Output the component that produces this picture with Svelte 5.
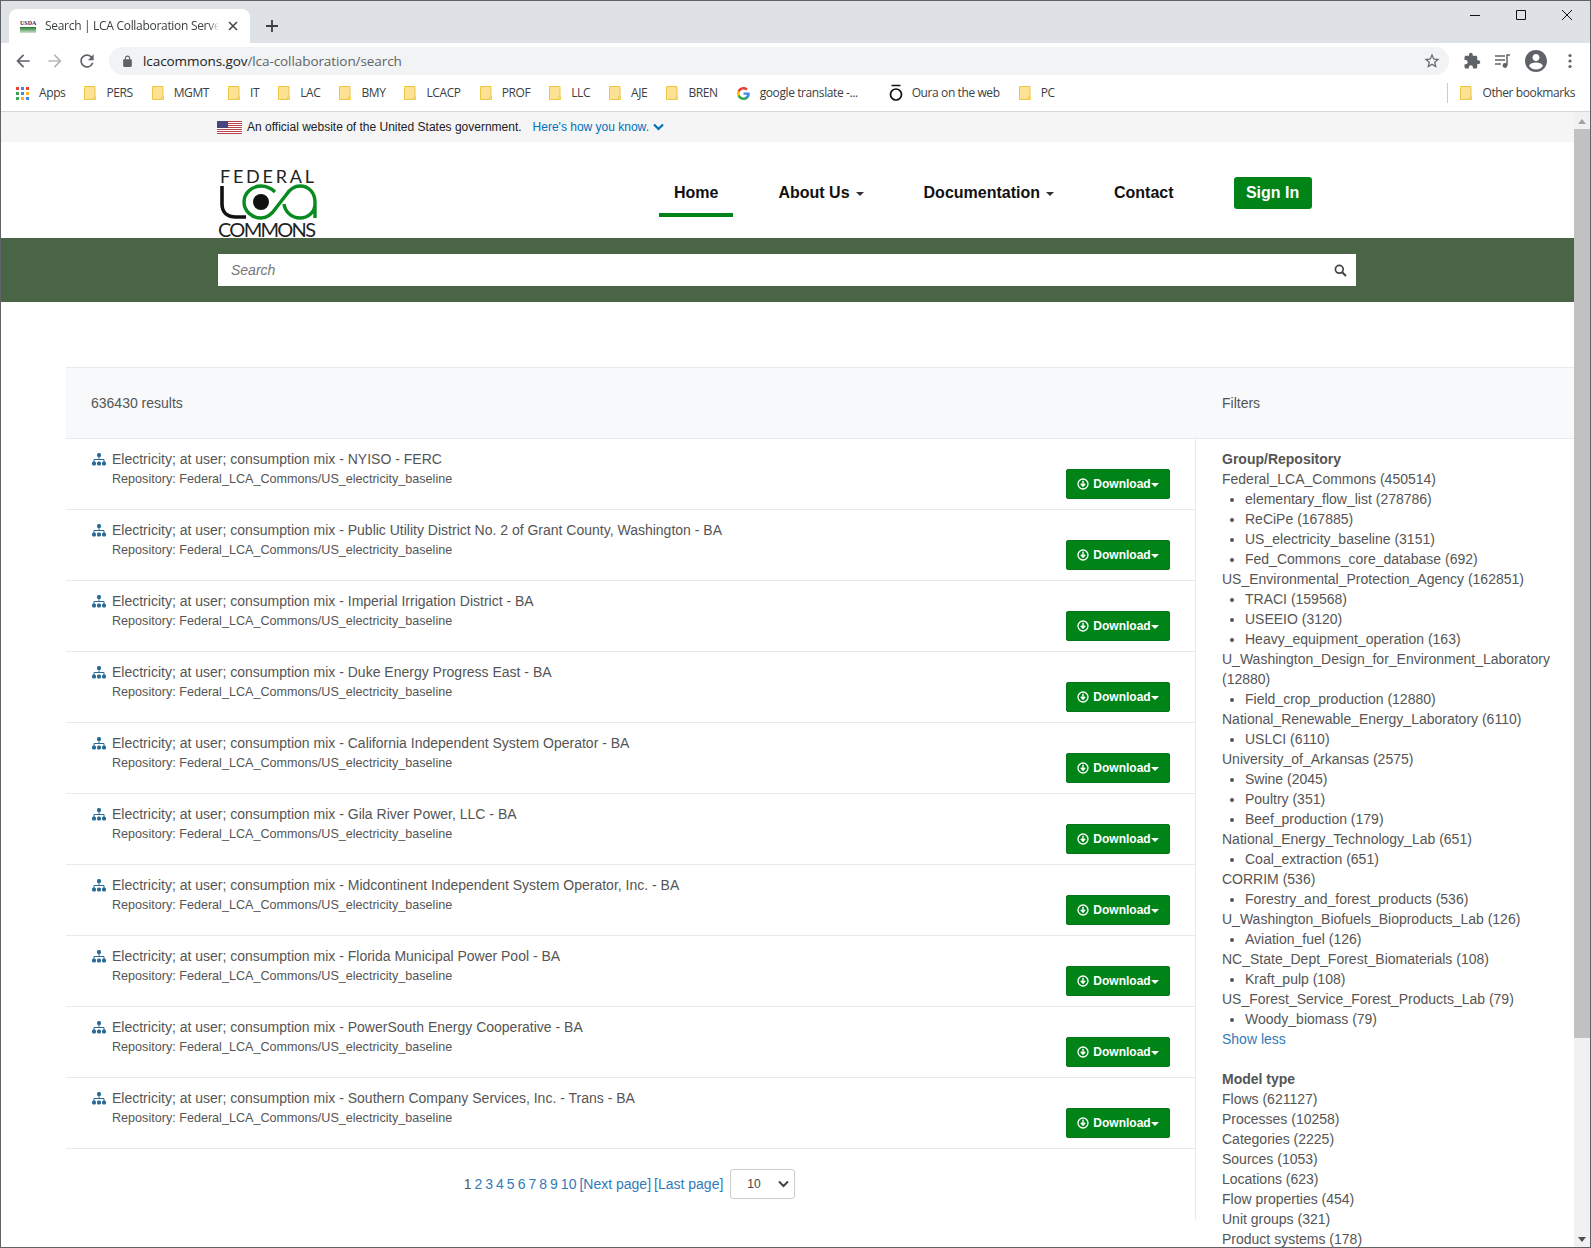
<script>
	const bookmarks = [
		{ label: 'PERS' }, { label: 'MGMT' }, { label: 'IT' }, { label: 'LAC' }, { label: 'BMY' },
		{ label: 'LCACP' }, { label: 'PROF' }, { label: 'LLC' }, { label: 'AJE' }, { label: 'BREN' }
	];

	const results = [
		'NYISO - FERC',
		'Public Utility District No. 2 of Grant County, Washington - BA',
		'Imperial Irrigation District - BA',
		'Duke Energy Progress East - BA',
		'California Independent System Operator - BA',
		'Gila River Power, LLC - BA',
		'Midcontinent Independent System Operator, Inc. - BA',
		'Florida Municipal Power Pool - BA',
		'PowerSouth Energy Cooperative - BA',
		'Southern Company Services, Inc. - Trans - BA'
	];

	const groups = [
		{ name: 'Federal_LCA_Commons (450514)', items: ['elementary_flow_list (278786)', 'ReCiPe (167885)', 'US_electricity_baseline (3151)', 'Fed_Commons_core_database (692)'] },
		{ name: 'US_Environmental_Protection_Agency (162851)', items: ['TRACI (159568)', 'USEEIO (3120)', 'Heavy_equipment_operation (163)'] },
		{ name: 'U_Washington_Design_for_Environment_Laboratory (12880)', items: ['Field_crop_production (12880)'] },
		{ name: 'National_Renewable_Energy_Laboratory (6110)', items: ['USLCI (6110)'] },
		{ name: 'University_of_Arkansas (2575)', items: ['Swine (2045)', 'Poultry (351)', 'Beef_production (179)'] },
		{ name: 'National_Energy_Technology_Lab (651)', items: ['Coal_extraction (651)'] },
		{ name: 'CORRIM (536)', items: ['Forestry_and_forest_products (536)'] },
		{ name: 'U_Washington_Biofuels_Bioproducts_Lab (126)', items: ['Aviation_fuel (126)'] },
		{ name: 'NC_State_Dept_Forest_Biomaterials (108)', items: ['Kraft_pulp (108)'] },
		{ name: 'US_Forest_Service_Forest_Products_Lab (79)', items: ['Woody_biomass (79)'] }
	];

	const modelTypes = [
		'Flows (621127)', 'Processes (10258)', 'Categories (2225)', 'Sources (1053)',
		'Locations (623)', 'Flow properties (454)', 'Unit groups (321)', 'Product systems (178)'
	];

	const pages = [2, 3, 4, 5, 6, 7, 8, 9, 10];
	const appColors = ['#ea4335', '#4285f4', '#ea4335', '#34a853', '#4285f4', '#fbbc05', '#34a853', '#fbbc05', '#4285f4'];
</script>

{#snippet folder()}
	<svg class="folder" width="12" height="14" viewBox="0 0 12 14">
		<path d="M.5.5h10.5v13H.5z" fill="#fde293" stroke="#eec643" />
		<path d="M9.5 11h2v2.5h-2z" fill="#fde293" stroke="#eec643" stroke-width=".8" />
	</svg>
{/snippet}

<div class="window">
	<div class="tabstrip">
		<div class="tab">
			<div class="favicon">
				<span>USDA</span>
				<i></i>
			</div>
			<span class="tab-title">Search | LCA Collaboration Server</span>
			<svg class="tab-close" width="10" height="10" viewBox="0 0 10 10">
				<path d="M1 1l8 8M9 1L1 9" stroke="#45494d" stroke-width="1.6" />
			</svg>
		</div>
		<svg class="new-tab" width="12" height="12" viewBox="0 0 12 12">
			<path d="M6 0v12M0 6h12" stroke="#3c4043" stroke-width="1.8" />
		</svg>
		<div class="win-controls">
			<svg width="12" height="12" viewBox="0 0 12 12"><path d="M1 6.5h10" stroke="#111" /></svg>
			<svg width="12" height="12" viewBox="0 0 12 12"><path d="M1.5 1.5h9v9h-9z" fill="none" stroke="#111" /></svg>
			<svg width="12" height="12" viewBox="0 0 12 12"><path d="M1 1l10 10M11 1L1 11" stroke="#111" /></svg>
		</div>
	</div>

	<div class="toolbar">
		<svg class="nav-ico" width="20" height="20" viewBox="0 0 24 24"><path fill="#5f6368" d="M20 11H7.83l5.59-5.59L12 4l-8 8 8 8 1.41-1.41L7.83 13H20v-2z" /></svg>
		<svg class="nav-ico" width="20" height="20" viewBox="0 0 24 24"><path fill="#b5b8bb" d="M4 11h12.17l-5.59-5.59L12 4l8 8-8 8-1.41-1.41L16.17 13H4v-2z" /></svg>
		<svg class="nav-ico" width="20" height="20" viewBox="0 0 24 24"><path fill="#5f6368" d="M17.65 6.35A7.958 7.958 0 0 0 12 4c-4.42 0-7.99 3.58-7.99 8s3.57 8 7.99 8c3.73 0 6.84-2.55 7.73-6h-2.08A5.99 5.99 0 0 1 12 18c-3.31 0-6-2.69-6-6s2.69-6 6-6c1.66 0 3.14.69 4.22 1.78L13 11h7V4l-2.35 2.35z" /></svg>
		<div class="omnibox">
			<svg width="13" height="13" viewBox="0 0 24 24"><path fill="#5f6368" d="M18 8h-1V6c0-2.76-2.24-5-5-5S7 3.24 7 6v2H6c-1.1 0-2 .9-2 2v10c0 1.1.9 2 2 2h12c1.1 0 2-.9 2-2V10c0-1.1-.9-2-2-2zM9 6c0-1.66 1.34-3 3-3s3 1.34 3 3v2H9V6z" /></svg>
			<span class="url">lcacommons.gov<span class="url-path">/lca-collaboration/search</span></span>
			<svg class="star" width="18" height="18" viewBox="0 0 24 24"><path fill="#5f6368" d="M22 9.24l-7.19-.62L12 2 9.19 8.63 2 9.24l5.46 4.73L5.82 21 12 17.27 18.18 21l-1.63-7.03L22 9.24zM12 15.4l-3.76 2.27 1-4.28-3.32-2.88 4.38-.38L12 6.1l1.71 4.04 4.38.38-3.32 2.88 1 4.28L12 15.4z" /></svg>
		</div>
		<div class="tool-icons">
			<svg width="18" height="18" viewBox="0 0 24 24"><path fill="#5f6368" d="M20.5 11H19V7c0-1.1-.9-2-2-2h-4V3.5C13 2.12 11.88 1 10.5 1S8 2.12 8 3.5V5H4c-1.1 0-1.99.9-1.99 2v3.8H3.5c1.49 0 2.7 1.21 2.7 2.7s-1.21 2.7-2.7 2.7H2V20c0 1.1.9 2 2 2h3.8v-1.5c0-1.49 1.21-2.7 2.7-2.7 1.49 0 2.7 1.21 2.7 2.7V22H17c1.1 0 2-.9 2-2v-4h1.5c1.38 0 2.5-1.12 2.5-2.5S21.88 11 20.5 11z" /></svg>
			<svg width="18" height="18" viewBox="0 0 18 18"><path fill="none" stroke="#5f6368" stroke-width="1.4" d="M1 4h10M1 8h10M1 12h6" /><path fill="none" stroke="#5f6368" stroke-width="1.5" d="M13 13V3h3" /><circle cx="11" cy="13.5" r="2.4" fill="#5f6368" /></svg>
			<svg class="avatar" width="24" height="24" viewBox="0 0 24 24"><path fill="#5f6368" d="M12 1C5.9 1 1 5.9 1 12s4.9 11 11 11 11-4.900 11-11S18.100 1 12 1zm0 4c1.900 0 3.500 1.600 3.500 3.500S13.900 12 12 12s-3.500-1.600-3.500-3.500S10.100 5 12 5zm0 15.500c-2.800 0-5.300-1.400-6.800-3.600.03-2.200 4.500-3.400 6.800-3.400 2.200 0 6.700 1.200 6.800 3.400-1.500 2.200-4 3.600-6.800 3.600z" /></svg>
			<svg class="dots" width="6" height="16" viewBox="0 0 6 16"><circle cx="3" cy="2.500" r="1.600" fill="#5f6368" /><circle cx="3" cy="8" r="1.600" fill="#5f6368" /><circle cx="3" cy="13.500" r="1.600" fill="#5f6368" /></svg>
		</div>
	</div>

	<div class="bookmarks">
		<div class="bm">
			<div class="apps">
				{#each appColors as c}
					<i style="background:{c}"></i>
				{/each}
			</div>
			<span>Apps</span>
		</div>
		{#each bookmarks as b}
			<div class="bm">
				{@render folder()}
				<span>{b.label}</span>
			</div>
		{/each}
		<div class="bm">
			<svg width="13" height="13" viewBox="0 0 24 24">
				<path fill="#4285f4" d="M23.500 12.300c0-.8-.1-1.600-.2-2.300H12v4.500h6.500c-.3 1.500-1.100 2.800-2.400 3.600v3h3.900c2.300-2.100 3.500-5.200 3.500-8.800z" />
				<path fill="#34a853" d="M12 24c3.200 0 6-1.100 8-2.900l-3.900-3c-1.100.7-2.500 1.200-4.100 1.200-3.100 0-5.800-2.100-6.700-5H1.300v3.100C3.300 21.300 7.300 24 12 24z" />
				<path fill="#fbbc05" d="M5.300 14.300c-.5-1.500-.5-3.100 0-4.600V6.600H1.300c-1.700 3.300-1.700 7.500 0 10.800l4-3.100z" />
				<path fill="#ea4335" d="M12 4.800c1.800 0 3.300.6 4.600 1.800l3.400-3.400C17.900 1.200 15.200 0 12 0 7.300 0 3.300 2.700 1.300 6.600l4 3.100c.9-2.800 3.600-4.900 6.700-4.900z" />
			</svg>
			<span>google translate -...</span>
		</div>
		<div class="bm oura">
			<svg width="14" height="18" viewBox="0 0 14 18">
				<path d="M2.500 1.500h9" stroke="#111" stroke-width="1.500" />
				<circle cx="7" cy="10.500" r="5.500" fill="none" stroke="#111" stroke-width="1.700" />
			</svg>
			<span>Oura on the web</span>
		</div>
		<div class="bm">
			{@render folder()}
			<span>PC</span>
		</div>
		<div class="bm other">
			{@render folder()}
			<span>Other bookmarks</span>
		</div>
	</div>

	<div class="viewport">
		<div class="page">
			<div class="gov-banner">
				<svg width="25" height="13" viewBox="0 0 25 13">
					<rect width="25" height="13" fill="#fff" />
					<path d="M0 .5h25M0 2.500h25M0 4.500h25M0 6.500h25M0 8.500h25M0 10.500h25M0 12.500h25" stroke="#b8434f" />
					<rect width="11" height="7" fill="#46467f" />
				</svg>
				<span class="official">An official website of the United States government.</span>
				<span class="know">Here's how you know.</span>
				<svg width="11" height="8" viewBox="0 0 11 8"><path d="M1 1.500l4.500 4.500L10 1.500" fill="none" stroke="#0071bc" stroke-width="2.200" /></svg>
			</div>

			<header class="site-header">
				<svg class="logo" width="100" height="72" viewBox="0 0 100 72">
					<text x="2" y="17" class="logo-top" textLength="94">FEDERAL</text>
					<path d="M4 20V38C4 47 10 51 18 51H28" fill="none" stroke="#111" stroke-width="3.600" />
					<path d="M57 26C53 22 48 20 43 20C34 20 26 27 26 36C26 45 34 52 43 52C50 52 54 48 58 42L68 29C72 23 76 20 82 20C91 20 97 27 97 36V52M97 38C97 46 90 52 82 52C74 52 67 46 66 38" fill="none" stroke="#078a1f" stroke-width="3.400" />
					<circle cx="43" cy="36" r="8" fill="#111" />
					<text x="0" y="71" class="logo-bottom" textLength="98">COMMONS</text>
				</svg>
				<nav class="site-nav">
					<a class="nav-item active" href="#home">Home</a>
					<a class="nav-item" href="#about">About Us <i class="caret"></i></a>
					<a class="nav-item" href="#docs">Documentation <i class="caret"></i></a>
					<a class="nav-item" href="#contact">Contact</a>
					<a class="sign-in" href="#signin">Sign In</a>
				</nav>
			</header>

			<div class="search-band">
				<div class="search-box">
					<span>Search</span>
					<svg width="13" height="13" viewBox="0 0 13 13">
						<circle cx="5.300" cy="5.300" r="3.900" fill="none" stroke="#444" stroke-width="1.700" />
						<path d="M8.200 8.200l3.800 3.800" stroke="#444" stroke-width="2" />
					</svg>
				</div>
			</div>

			<section class="panel">
				<div class="panel-head">
					<div class="count">636430 results</div>
					<div class="filters-title">Filters</div>
				</div>
				<div class="panel-body">
					<div class="results">
						{#each results as r}
							<div class="row">
								<svg class="sitemap" width="14" height="13" viewBox="0 0 14 13">
									<rect x="5" y="0" width="4" height="4" rx="1.500" fill="#286b97" />
									<path d="M7 4v3M2 9V6.500h10V9" fill="none" stroke="#286b97" />
									<rect x="0" y="8.500" width="4" height="4" rx="1.500" fill="#286b97" />
									<rect x="5" y="8.500" width="4" height="4" rx="1.500" fill="#286b97" />
									<rect x="10" y="8.500" width="4" height="4" rx="1.500" fill="#286b97" />
								</svg>
								<div class="row-text">
									<div class="row-title">Electricity; at user; consumption mix - {r}</div>
									<div class="row-repo">Repository: Federal_LCA_Commons/US_electricity_baseline</div>
								</div>
								<button class="download" type="button">
									<svg width="12" height="12" viewBox="0 0 12 12">
										<circle cx="6" cy="6" r="5" fill="none" stroke="#fff" stroke-width="1.300" />
										<path d="M6 2.800v5M3.800 5.800L6 8.200l2.200-2.400" fill="none" stroke="#fff" stroke-width="1.400" />
									</svg>
									Download<i class="caret white"></i>
								</button>
							</div>
						{/each}
						<div class="pagination">
							<span class="current">1</span>
							{#each pages as p}
								<a href="#p{p}">{p}</a>
							{/each}
							<a href="#next">[Next page]</a>
							<a href="#last">[Last page]</a>
							<div class="per-page">
								<span>10</span>
								<svg width="11" height="8" viewBox="0 0 11 8"><path d="M1 1.500l4.500 4.500L10 1.500" fill="none" stroke="#444" stroke-width="2" /></svg>
							</div>
						</div>
					</div>
					<aside class="sidebar">
						<h4>Group/Repository</h4>
						{#each groups as g}
							<div>{g.name}</div>
							<ul>
								{#each g.items as it}
									<li>{it}</li>
								{/each}
							</ul>
						{/each}
						<a class="show-less" href="#less">Show less</a>
						<h4 class="second">Model type</h4>
						{#each modelTypes as m}
							<div>{m}</div>
						{/each}
					</aside>
				</div>
			</section>
		</div>

		<div class="scrollbar">
			<div class="arrow up"></div>
			<div class="thumb"></div>
			<div class="arrow down"></div>
		</div>
	</div>
</div>

<style>
	:global(html), :global(body) {
		margin: 0;
		overflow: hidden;
	}

	.window {
		box-sizing: border-box;
		display: flex;
		flex-direction: column;
		width: 1591px;
		height: 1248px;
		overflow: hidden;
		border: 1px solid #5f6368;
		background: #fff;
		font-family: 'Liberation Sans', Arial, sans-serif;
		font-size: 14px;
		line-height: 20px;
		color: #555;
	}

	/* browser chrome */
	.tabstrip {
		display: flex;
		align-items: flex-end;
		flex: none;
		height: 42px;
		background: #dee1e6;
		font-family: 'Open Sans', sans-serif;
	}

	.tab {
		display: flex;
		align-items: center;
		box-sizing: border-box;
		width: 241px;
		height: 34px;
		margin-left: 8px;
		padding: 0 9px 0 11px;
		border-radius: 8px 8px 0 0;
		background: #fff;
	}

	.favicon {
		flex: none;
		width: 16px;
		margin-right: 9px;
	}

	.favicon span {
		display: block;
		font: bold 6px/7px 'Liberation Serif', serif;
		color: #2b2a6e;
		text-align: center;
	}

	.favicon i {
		display: block;
		height: 6px;
		background: linear-gradient(#1f7a2a, #cfe3cf);
	}

	.tab-title {
		flex: 1;
		overflow: hidden;
		white-space: nowrap;
		font-size: 12px;
		letter-spacing: -0.3px;
		color: #3c4043;
		mask-image: linear-gradient(to left, transparent 0, #000 10px);
	}

	.tab-close {
		flex: none;
		margin: 0 3px 0 9px;
	}

	.new-tab {
		margin: 0 0 11px 16px;
	}

	.win-controls {
		display: flex;
		gap: 34px;
		margin: 0 17px 22px auto;
	}

	.toolbar {
		display: flex;
		align-items: center;
		flex: none;
		height: 32px;
		padding-top: 4px;
		box-sizing: border-box;
		background: #fff;
		font-family: 'Open Sans', sans-serif;
	}

	.nav-ico {
		flex: none;
		margin-left: 12px;
	}

	.omnibox {
		display: flex;
		align-items: center;
		box-sizing: border-box;
		width: 1340px;
		height: 28px;
		margin-left: 12px;
		padding: 0 8px 0 12px;
		border-radius: 14px;
		background: #f1f3f4;
	}

	.url {
		margin-left: 9px;
		font-size: 13.5px;
		letter-spacing: -0.08px;
		color: #202124;
	}

	.url-path {
		color: #5f6368;
	}

	.star {
		margin-left: auto;
	}

	.tool-icons {
		display: flex;
		align-items: center;
		margin-left: 14px;
		gap: 13px;
	}

	.avatar {
		margin-left: -1px;
	}

	.dots {
		margin-left: 6px;
	}

	.bookmarks {
		display: flex;
		align-items: center;
		flex: none;
		gap: 19px;
		box-sizing: border-box;
		height: 37px;
		padding: 0 15px 0 15px;
		border-bottom: 1px solid #d5d7da;
		background: #fff;
		font-family: 'Open Sans', sans-serif;
		font-size: 12px;
		letter-spacing: -0.4px;
		color: #3c4043;
	}

	.bm {
		display: flex;
		align-items: center;
		gap: 10px;
	}

	.apps {
		display: grid;
		grid-template-columns: repeat(3, 3px);
		gap: 2px;
	}

	.apps i {
		width: 3px;
		height: 3px;
	}

	.oura {
		margin-left: 12px;
		gap: 9px;
	}

	.other {
		margin-left: auto;
		padding-left: 12px;
		border-left: 1px solid #ccc;
	}

	/* page */
	.viewport {
		display: flex;
		flex: 1;
		min-height: 0;
	}

	.page {
		flex: 1;
		min-width: 0;
		overflow: hidden;
	}

	.gov-banner {
		display: flex;
		align-items: center;
		height: 30px;
		padding-left: 216px;
		background: #f5f5f5;
		font-size: 12px;
	}

	.official {
		margin-left: 5px;
		color: #212121;
	}

	.know {
		margin: 0 4px 0 11px;
		color: #0071bc;
	}

	.site-header {
		display: flex;
		height: 96px;
		padding-left: 217px;
		box-sizing: border-box;
	}

	.logo {
		flex: none;
		margin-top: 24px;
		overflow: visible;
	}

	.logo-top {
		font-size: 18px;
		font-family: 'Lato', sans-serif;
		fill: #222;
	}

	.logo-bottom {
		font-size: 20px;
		font-family: 'Lato', sans-serif;
		fill: #222;
	}

	.site-nav {
		display: flex;
		gap: 30px;
		height: 75px;
		margin-left: 341px;
		font-size: 16px;
		font-weight: bold;
	}

	.nav-item {
		display: flex;
		align-items: flex-end;
		gap: 6px;
		box-sizing: border-box;
		height: 75px;
		padding: 0 15px 10px;
		border-bottom: 4px solid transparent;
		color: #111;
		text-decoration: none;
	}

	.nav-item.active {
		border-bottom-color: #008418;
	}

	.caret {
		display: inline-block;
		width: 0;
		height: 0;
		margin-bottom: 7px;
		border-top: 4px solid #333;
		border-left: 4px solid transparent;
		border-right: 4px solid transparent;
	}

	.sign-in {
		align-self: flex-end;
		box-sizing: border-box;
		width: 78px;
		height: 32px;
		margin: 0 0 8px 15px;
		border-radius: 3px;
		background: #008418;
		color: #fff;
		line-height: 32px;
		text-align: center;
		text-decoration: none;
	}

	.search-band {
		height: 64px;
		padding: 16px 0 0 217px;
		box-sizing: border-box;
		background: #4a6546;
	}

	.search-box {
		display: flex;
		align-items: center;
		justify-content: space-between;
		box-sizing: border-box;
		width: 1138px;
		height: 32px;
		padding: 0 9px 0 13px;
		background: #fff;
		font-style: italic;
		color: #777;
	}

	.panel {
		margin: 65px 0 0 65px;
	}

	.panel-head {
		display: flex;
		align-items: center;
		box-sizing: border-box;
		height: 72px;
		border-top: 1px solid #e7ebf0;
		border-bottom: 1px solid #e7ebf0;
		background: #f8f9fb;
	}

	.count {
		box-sizing: border-box;
		width: 1156px;
		padding-left: 25px;
	}

	.panel-body {
		display: flex;
		align-items: flex-start;
	}

	.results {
		box-sizing: border-box;
		flex: none;
		width: 1130px;
		height: 781px;
		border-right: 1px solid #e7ebf0;
	}

	.row {
		display: flex;
		box-sizing: border-box;
		height: 71px;
		padding: 10px 25px 10px 26px;
		border-bottom: 1px solid #e7ebf0;
	}

	.sitemap {
		flex: none;
		margin: 4px 6px 0 0;
	}

	.row-text {
		flex: 1;
	}

	.row-repo {
		font-size: 12.6px;
	}

	.download {
		display: flex;
		align-items: center;
		align-self: flex-end;
		justify-content: center;
		gap: 4px;
		box-sizing: border-box;
		width: 104px;
		height: 30px;
		padding: 0;
		border: 1px solid #06761b;
		border-radius: 2px;
		background: #008418;
		font: bold 12px 'Liberation Sans', Arial, sans-serif;
		color: #fff;
	}

	.caret.white {
		margin: 2px 0 0 -4px;
		border-top-color: #fff;
	}

	.pagination {
		display: flex;
		align-items: center;
		justify-content: center;
		gap: 3px;
		height: 70px;
		padding-right: 2px;
	}

	.pagination a {
		color: #337ab7;
		text-decoration: none;
	}

	.per-page {
		display: flex;
		align-items: center;
		justify-content: space-between;
		box-sizing: border-box;
		width: 65px;
		height: 30px;
		margin-left: 4px;
		padding: 0 5px 0 16px;
		border: 1px solid #ccc;
		border-radius: 3px;
		font-size: 12px;
		color: #444;
	}

	.sidebar {
		box-sizing: border-box;
		width: 378px;
		padding: 10px 20px 0 26px;
	}

	.sidebar h4 {
		margin: 0;
		font-size: 14px;
		line-height: 20px;
		font-weight: bold;
	}

	.sidebar .second {
		margin-top: 20px;
	}

	.sidebar ul {
		margin: 0;
		padding: 0 0 0 23px;
	}

	.show-less {
		color: #337ab7;
		text-decoration: none;
	}

	.scrollbar {
		display: flex;
		flex: none;
		flex-direction: column;
		width: 16px;
		background: #f1f1f1;
	}

	.arrow {
		flex: none;
		height: 17px;
		position: relative;
	}

	.arrow::after {
		content: '';
		position: absolute;
		left: 4px;
		top: 7px;
		border-left: 4px solid transparent;
		border-right: 4px solid transparent;
	}

	.up::after {
		border-bottom: 5px solid #a3a3a3;
	}

	.down {
		margin-top: auto;
	}

	.down::after {
		border-top: 5px solid #505050;
	}

	.thumb {
		flex: none;
		height: 909px;
		background: #c1c1c1;
	}
</style>
